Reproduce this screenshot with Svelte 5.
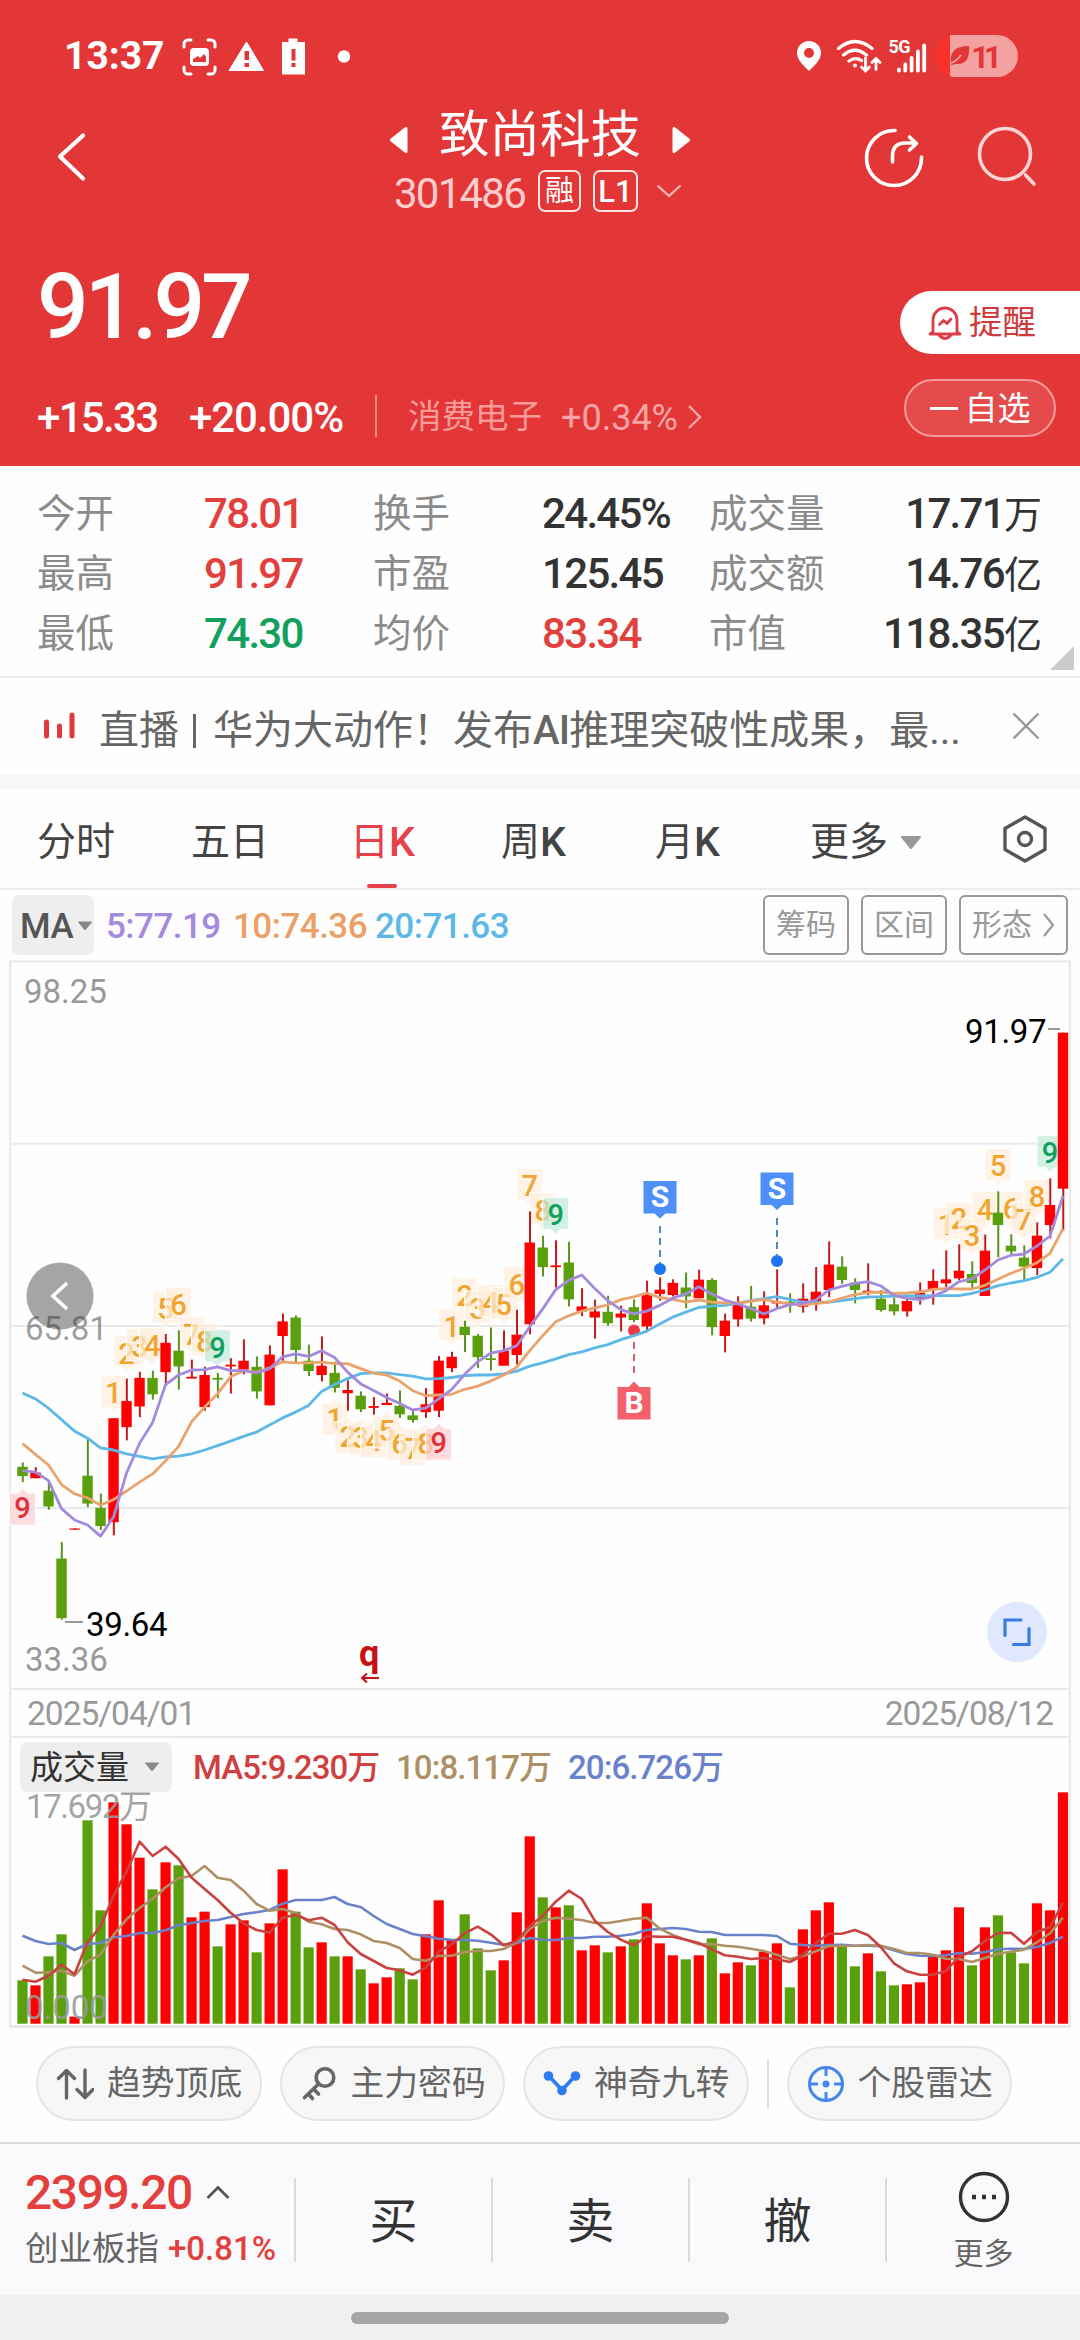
<script lang="ts">
  const stats = [
    { label: '今开', value: '78.01', tone: 'up' },
    { label: '换手', value: '24.45%', tone: '' },
    { label: '成交量', value: '17.71', unit: '万', tone: '' },
    { label: '最高', value: '91.97', tone: 'up' },
    { label: '市盈', value: '125.45', tone: '' },
    { label: '成交额', value: '14.76', unit: '亿', tone: '' },
    { label: '最低', value: '74.30', tone: 'down' },
    { label: '均价', value: '83.34', tone: 'up' },
    { label: '市值', value: '118.35', unit: '亿', tone: '' }
  ];

  const STEP = 13.006;
  const X0 = 22.5;
  const cx = (i: number) => X0 + i * STEP;

  // [rising, high, top, bottom, low]
  // y units: the first 54 are stored at 2.8x from 1100, the rest at 3x from 1000
  const rawA = [
    [0, 1015, 1027, 1053, 1070], [1, 1028, 1043, 1059, 1059], [0, 1070, 1094, 1138, 1147],
    [0, 1238, 1284, 1451, 1455], [1, 1199, 1199, 1203, 1203], [0, 950, 1052, 1130, 1140],
    [0, 1102, 1142, 1193, 1204], [1, 891, 891, 1182, 1219], [1, 780, 843, 916, 953],
    [1, 761, 778, 858, 888], [0, 758, 778, 824, 839], [1, 655, 680, 762, 795],
    [0, 645, 702, 746, 811], [1, 727, 775, 779, 779], [1, 747, 770, 860, 870],
    [0, 764, 778, 782, 835], [1, 723, 741, 746, 822], [1, 670, 730, 755, 768],
    [0, 718, 747, 816, 836], [1, 687, 713, 855, 855], [1, 598, 620, 661, 735],
    [0, 603, 609, 700, 735], [0, 685, 730, 759, 773], [1, 662, 744, 770, 788],
    [0, 733, 764, 806, 819], [1, 785, 812, 821, 870], [0, 816, 828, 866, 874],
    [1, 832, 857, 861, 881], [1, 822, 848, 854, 854], [0, 813, 856, 880, 890],
    [0, 870, 883, 896, 903], [1, 807, 852, 874, 890], [1, 717, 730, 870, 888],
    [1, 705, 719, 751, 762], [0, 618, 635, 658, 706], [0, 655, 660, 720, 750],
    [0, 637, 723, 727, 758], [1, 645, 702, 744, 744], [1, 587, 657, 714, 740],
    [1, 312, 399, 628, 656], [0, 380, 413, 468, 494], [1, 393, 463, 468, 525],
    [0, 397, 455, 558, 578], [1, 527, 578, 592, 605], [1, 559, 592, 609, 668],
    [0, 548, 593, 625, 632], [1, 576, 598, 609, 648], [0, 558, 580, 616, 622],
    [1, 506, 544, 634, 650], [1, 497, 531, 543, 562], [1, 502, 512, 546, 550],
    [0, 483, 525, 550, 583], [1, 475, 503, 555, 555], [0, 499, 504, 636, 659]
  ];
  const rawB = [
    [1, 941, 962, 1008, 1057], [1, 889, 912, 958, 980], [0, 858, 920, 956, 965],
    [1, 874, 916, 955, 973], [1, 808, 905, 909, 925], [0, 880, 905, 909, 938],
    [1, 850, 896, 920, 938], [1, 801, 875, 905, 932], [1, 724, 794, 870, 891],
    [0, 769, 800, 840, 852], [0, 835, 848, 870, 910], [1, 790, 872, 876, 885],
    [0, 870, 896, 930, 935], [0, 893, 913, 934, 946], [1, 895, 903, 934, 950],
    [1, 847, 878, 898, 914], [1, 808, 843, 867, 914], [1, 751, 838, 850, 862],
    [1, 733, 812, 835, 840], [0, 784, 822, 849, 870], [1, 704, 752, 888, 888],
    [0, 574, 638, 675, 772], [0, 703, 737, 754, 762], [0, 736, 773, 800, 840],
    [1, 667, 707, 804, 825], [1, 535, 615, 675, 715], [1, 98, 98, 566, 693]
  ];
  const ya = (v: number) => 1100 + v / 2.8;
  const yb = (v: number) => 1000 + v / 3;
  const candles = [
    ...rawA.map(([up, ...v]) => ({ up, y: v.map(ya) })),
    ...rawB.map(([up, ...v]) => ({ up, y: v.map(yb) }))
  ];

  const line = (a: number[], b: number[] = [], fa = ya) =>
    [...a.map(fa), ...b.map(yb)].map((y, i) => `${cx(i).toFixed(1)},${y.toFixed(1)}`).join(' ');

  const ma5 = line(
    [1038, 1042, 1066, 1144, 1176, 1190, 1221, 1168, 1045, 961, 903, 797, 770, 756, 755, 747, 758, 758, 764, 752, 719, 711, 718, 702, 721, 762, 795, 813, 833, 850, 868, 863, 837, 810, 768, 733, 709, 702, 688, 635, 585, 531, 505, 490, 528, 562, 587, 599, 591, 575, 555, 543, 523, 543],
    [900, 912, 925, 942, 926, 914, 910, 900, 870, 859, 850, 845, 858, 886, 895, 899, 889, 872, 845, 837, 810, 780, 766, 762, 738, 708, 588]
  );
  const ma10 = line(
    [962, 992, 1022, 1077, 1103, 1114, 1134, 1119, 1095, 1070, 1047, 1010, 970, 901, 860, 822, 775, 758, 762, 750, 733, 736, 736, 734, 738, 738, 752, 765, 770, 787, 814, 828, 826, 824, 810, 801, 787, 770, 748, 702, 660, 621, 604, 591, 582, 574, 559, 551, 541, 553, 558, 566, 560, 566],
    [909, 909, 904, 898, 906, 912, 914, 911, 906, 894, 884, 878, 876, 880, 879, 876, 868, 866, 867, 867, 856, 838, 820, 805, 788, 760, 686]
  );
  const ma20 = line(
    [820, 837, 863, 895, 927, 947, 974, 980, 991, 998, 1005, 999, 997, 991, 980, 968, 955, 942, 930, 910, 890, 874, 855, 816, 797, 780, 766, 764, 764, 769, 773, 781, 780, 777, 772, 770, 770, 767, 759, 745, 736, 725, 713, 705, 694, 685, 671, 660, 647, 627, 608, 594, 581, 577],
    [916, 910, 902, 896, 890, 898, 906, 908, 906, 902, 896, 891, 890, 888, 888, 888, 887, 887, 887, 880, 870, 857, 849, 842, 832, 817, 776]
  );

  // nine-turn counters: first candle index and side
  const turns: { i: number; n: number; below: boolean }[] = [{ i: 0, n: 9, below: true }];
  for (const [start, below] of [[7, false], [24, true], [33, false], [71, false]] as [number, boolean][]) {
    for (let n = 1; n <= 9; n++) turns.push({ i: start + n - 1, n, below });
  }
  const turnTop = (t: { i: number; below: boolean }) =>
    t.below ? candles[t.i].y[3] + 11 : candles[t.i].y[0] - 43;
  const turnKind = (t: { n: number; below: boolean }) => (t.n < 9 ? 'count' : t.below ? 'buy' : 'sell');

  const yv = (v: number) => 1640 + v / 3;
  const volumes = [
    1021, 1036, 949, 883, 1130, 541, 811, 487, 553, 653, 748, 667, 676, 832, 815, 919, 853, 841, 937, 850, 688,
    815, 922, 907, 949, 949, 988, 1030, 1012, 985, 1018, 883, 781, 900, 823, 925, 991, 961, 817, 589, 772, 802,
    796, 931, 916, 937, 919, 898, 790, 910, 946, 958, 946, 895, 1000, 967, 976, 935, 910, 1042, 868, 811, 787,
    919, 979, 940, 994, 1036, 1033, 1027, 950, 931, 802, 976, 862, 826, 937, 970, 790, 811, 457
  ].map(yv);
  const vma5 = line([1019, 1025, 1007, 974, 1003, 907, 860, 767, 695, 605, 648, 620, 657, 713, 747, 780, 818, 850, 870, 878, 833, 824, 841, 833, 855, 907, 942, 963, 984, 991, 1004, 983, 935, 913, 880, 860, 883, 916, 903, 858, 828, 785, 752, 777, 842, 876, 899, 916, 889, 890, 890, 899, 909, 928, 946, 950, 957, 954, 958, 966, 945, 910, 881, 881, 870, 885, 922, 970, 994, 1004, 1004, 993, 950, 934, 903, 879, 878, 911, 876, 862, 788], [], yv);
  const vma10 = line([977, 998, 997, 992, 1007, 964, 943, 885, 838, 804, 776, 742, 715, 708, 678, 713, 720, 752, 792, 812, 807, 819, 845, 853, 867, 870, 883, 903, 909, 924, 957, 962, 947, 947, 936, 933, 933, 927, 907, 867, 843, 833, 836, 840, 849, 849, 843, 836, 833, 866, 885, 899, 913, 912, 917, 920, 926, 933, 944, 957, 948, 934, 918, 918, 917, 915, 917, 927, 939, 939, 944, 956, 957, 966, 954, 941, 935, 929, 907, 880, 833], [], yv);
  const vma20 = line([887, 903, 912, 909, 930, 912, 909, 892, 888, 879, 879, 871, 856, 849, 843, 840, 831, 822, 817, 810, 791, 780, 780, 780, 771, 792, 801, 828, 852, 867, 882, 889, 896, 899, 900, 902, 908, 914, 910, 894, 899, 900, 894, 894, 890, 890, 887, 882, 870, 867, 864, 867, 875, 876, 885, 885, 885, 885, 888, 911, 915, 917, 915, 914, 917, 917, 919, 931, 942, 947, 948, 946, 939, 941, 936, 928, 926, 927, 921, 909, 890], [], yv);
</script>

<div class="screen">
  <header>
    <div class="status">
      <span class="clock">13:37</span>
      <svg class="s-left" width="170" height="40" viewBox="180 36 170 40">
        <g fill="none" stroke="#fff" stroke-width="3" stroke-linecap="round">
          <path d="M191 41h-3a4 4 0 0 0-4 4v3M208 41h3a4 4 0 0 1 4 4v3M191 75h-3a4 4 0 0 1-4-4v-3M208 75h3a4 4 0 0 0 4-4v-3" transform="translate(0 -1)" />
        </g>
        <rect x="190" y="48" width="19" height="18" rx="4" fill="#fff" />
        <path d="M193 62v-3l5-3 2 2 4-4 2 3v5z" fill="#e33637" />
        <path d="M246.500 42l17 28.500h-34.500z" fill="#fff" stroke="#fff" stroke-width="1" stroke-linejoin="round" />
        <path d="M244.500 51h4.500v9h-4.500zM244.500 63h4.500v4h-4.500z" fill="#e33637" />
        <path d="M282 42h6.500v-3.500h9v3.500h7.500v32.500h-23z" fill="#fff" />
        <path d="M291.500 49h4v11.500h-4zM291.500 63h4v4h-4z" fill="#e33637" />
        <circle cx="344" cy="56.500" r="6.200" fill="#fff" />
      </svg>
      <svg class="s-right" width="222" height="44" viewBox="796 34 222 44">
        <path fill-rule="evenodd" d="M809 41a12 12 0 0 1 12 12c0 7-7 13-12 18-5-5-12-11-12-18a12 12 0 0 1 12-12zm0 7a5 5 0 1 0 0 10 5 5 0 0 0 0-10z" fill="#fff" />
        <g fill="none" stroke="#fff" stroke-width="3.200" stroke-linecap="round">
          <path d="M838.500 48.500q16.500-14 33.500 0M843.500 55q11.500-9.500 23 0M849 61q6.500-4.500 12.500-.5" />
          <path d="M865.500 58v12M861.500 67l4 4 4-4M876 69.500V59M872 62.500l4-4 4 4" stroke-width="2.800" />
        </g>
        <circle cx="855" cy="65.500" r="2" fill="#fff" />
        <text x="888.500" y="53" font-size="18" font-weight="700" fill="#fff" textLength="22">5G</text>
        <path d="M899 69.500v1M905.300 64.500v6M911.600 58v12.500M917.900 51.500v19M924.200 45.500v25" stroke="#fff" stroke-width="3.800" stroke-linecap="round" />
        <path d="M950 35h47a20.800 20.800 0 0 1 0 42h-43q-2 0-4-1z" fill="#f3a1a1" />
        <path d="M950 35.500a21.500 21.500 0 0 0 0 41z" fill="#f8322a" />
        <path d="M951 63c-1-10 3-17 18-17 1 12-3 19-13 18l-5 1z" fill="#e33637" />
        <path d="M951 63q6-2 10-8" stroke="#f3a1a1" stroke-width="1.800" fill="none" />
        <text x="971" y="67.500" font-size="32" font-weight="700" fill="#e33637" textLength="31">11</text>
      </svg>
    </div>

    <div class="nav">
      <svg class="back" width="36" height="56" viewBox="54 129 36 56"><path d="M83 136L60 157l23 22" transform="translate(0 -.5)" fill="none" stroke="#fff" stroke-width="4.200" stroke-linecap="round" stroke-linejoin="round" /></svg>
      <div class="title">
        <div class="name">
          <svg width="20" height="28" viewBox="0 0 20 28"><path d="M17 2.500L2.500 14 17 25.500z" fill="#fff" stroke="#fff" stroke-width="3" stroke-linejoin="round" /></svg>
          <h1>致尚科技</h1>
          <svg width="20" height="28" viewBox="0 0 20 28"><path d="M3 2.500L17.500 14 3 25.500z" fill="#fff" stroke="#fff" stroke-width="3" stroke-linejoin="round" /></svg>
        </div>
        <div class="code">
          <span class="num">301486</span>
          <span class="tag">融</span>
          <span class="tag l1">L1</span>
          <svg width="26" height="14" viewBox="0 0 26 14"><path d="M1.500 1.500L13 12 24.500 1.500" fill="none" stroke="#fbb" stroke-width="2.200" /></svg>
        </div>
      </div>
      <svg class="tools" width="180" height="70" viewBox="862 122 180 70" fill="none" stroke="#fff" stroke-linecap="round">
        <path d="M895 130.500A27.500 27.500 0 1 0 921.500 157" stroke-width="3.600" />
        <path d="M892.500 162v-6q0-13 13-13h10M909.500 137l7 6.500-7 6.500" stroke-width="3.600" stroke-linejoin="round" />
        <circle cx="1005" cy="154" r="25.500" stroke="#ffd4d4" stroke-width="3.600" />
        <path d="M1025.500 175l8.500 9" stroke="#ffd4d4" stroke-width="3.600" />
      </svg>
    </div>

    <div class="quote">
      <div class="price num">91.97</div>
      <div class="remind">
        <svg width="34" height="36" viewBox="0 0 34 36" fill="none" stroke="#dd3d44" stroke-width="2.800" stroke-linejoin="round" stroke-linecap="round">
          <path d="M5 27V15a12 12 0 0 1 24 0v12l3 2H2zM11 30q6 7 12 0" />
          <path d="M11.500 19.500l4-4 3.500 3 4-4.500" />
        </svg>
        <span>提醒</span>
      </div>
    </div>

    <div class="change">
      <span class="num delta">+15.33</span>
      <span class="num pct">+20.00%</span>
      <i class="bar"></i>
      <span class="sector">消费电子</span>
      <span class="num sector-pct">+0.34%</span>
      <svg width="15" height="26" viewBox="0 0 15 26"><path d="M2 2l11 11L2 24" fill="none" stroke="#f9a5a5" stroke-width="2.400" /></svg>
      <div class="watch"><i></i>自选</div>
    </div>
  </header>

  <section class="stats">
    {#each stats as s}
      <span class="label">{s.label}</span>
      <span class="value num {s.tone}">{s.value}{#if s.unit}<small>{s.unit}</small>{/if}</span>
    {/each}
    <svg class="corner" width="24" height="24" viewBox="0 0 24 24"><path d="M24 0v24H0z" fill="#ccc" /></svg>
  </section>

  <section class="news">
    <svg width="34" height="28" viewBox="0 0 34 28"><path d="M3.500 10v14M16.500 14v10M29 3v21" stroke="#e0383c" stroke-width="5" stroke-linecap="round" /></svg>
    <p>直播<i></i>华为大动作！发布<b>AI</b>推理突破性成果，最...</p>
    <svg width="28" height="28" viewBox="0 0 28 28"><path d="M1.500 1.500l25 25M26.500 1.500l-25 25" stroke="#999" stroke-width="2.400" /></svg>
  </section>

  <nav class="tabs">
    <span>分时</span>
    <span>五日</span>
    <span class="active">日<b>K</b></span>
    <span>周<b>K</b></span>
    <span>月<b>K</b></span>
    <span class="more">更多<svg width="22" height="14" viewBox="0 0 22 14"><path d="M2 1h18l-9 11z" fill="#999" stroke="#999" stroke-width="2" stroke-linejoin="round" /></svg></span>
    <svg class="gear" width="48" height="50" viewBox="0 0 48 50" fill="none" stroke="#555" stroke-width="3.400" stroke-linejoin="round"><path d="M24 3l20 11.500v21L24 47 4 35.500v-21z" /><circle cx="24" cy="25" r="6.500" /></svg>
  </nav>

  <section class="ma-row">
    <span class="select num">MA<svg width="16" height="10" viewBox="0 0 16 10"><path d="M1.500 1h13L8 9z" fill="#888" stroke="#888" stroke-linejoin="round" /></svg></span>
    <span class="num m5">5:77.19</span>
    <span class="num m10">10:74.36</span>
    <span class="num m20">20:71.63</span>
    <div class="btns">
      <button>筹码</button>
      <button>区间</button>
      <button class="wide">形态<svg width="13" height="26" viewBox="0 0 13 26"><path d="M2 2l9 11-9 11" fill="none" stroke="#999" stroke-width="2.200" /></svg></button>
    </div>
  </section>

  <section class="chart">
    <svg width="1080" height="730" viewBox="0 960 1080 730">
      <path d="M10 1690V961.500h1060V1690M10 1143.700h1060M10 1325.900h1060M10 1508h1060M10 1689h1060" fill="none" stroke="#e9e9e9" stroke-width="2" />
      <circle cx="60" cy="1296" r="33.500" fill="#a5a5a5" />
      <path d="M67 1283l-14 13 14 13" fill="none" stroke="#fff" stroke-width="3.600" />

      {#each turns as t}
        {@const top = turnTop(t)}
        {@const x = cx(t.i)}
        <g class="turn {turnKind(t)}">
          <path
            d={t.below
              ? `M${x - 13} ${top}h8l5-5 5 5h8v32h-26z`
              : `M${x - 13} ${top}h26v32h-8l-5 5-5-5h-8z`}
          />
          <text {x} y={top + (t.below ? 25 : 28)}>{t.n}</text>
        </g>
      {/each}

      <g class="axis">
        <text x="24" y="1003">98.25</text>
        <text x="25" y="1339.500" class="mid">65.81</text>
        <text x="25" y="1671">33.36</text>
      </g>

      {#each candles as c, i}
        {@const color = c.up ? '#fe0000' : '#5aa00c'}
        {@const flat = c.y[2] - c.y[1] < 2}
        <line x1={cx(i) + 0.3} x2={cx(i) + 0.3} y1={c.y[0]} y2={c.y[3]} stroke={c.up ? '#c21a1a' : '#58931c'} stroke-width="2" />
        <rect x={cx(i) - 5.2} y={c.y[1]} width="10.400" height={flat ? 1.8 : c.y[2] - c.y[1]} fill={color} opacity={i === 4 ? 0.65 : 1} />
      {/each}

      <circle cx="634" cy="1330.500" r="6" fill="#ee3a46" />
      <polyline points={ma20} fill="none" stroke="#5cb8e6" stroke-width="2.800" stroke-linejoin="round" />
      <polyline points={ma10} fill="none" stroke="#eba36d" stroke-width="2.800" stroke-linejoin="round" />
      <polyline points={ma5} fill="none" stroke="#a48add" stroke-width="2.800" stroke-linejoin="round" />

      <g class="mark">
        <path d="M643.500 1181h33v32.500h-11l-5.500 5-5.500-5h-11z" fill="#4f8ff8" />
        <text x="660" y="1207">S</text>
        <path d="M660 1226v37" stroke="#4a8acb" stroke-width="2" stroke-dasharray="7 5" />
        <circle cx="660" cy="1269" r="6" fill="#1f74f2" />
        <path d="M760.500 1172.500h33v32.500h-11l-5.500 5-5.500-5h-11z" fill="#4f8ff8" />
        <text x="777" y="1199">S</text>
        <path d="M777 1218v37" stroke="#4a8acb" stroke-width="2" stroke-dasharray="7 5" />
        <circle cx="777" cy="1261" r="6" fill="#1f74f2" />
        <path d="M617.500 1419.500v-32.500h11l5.500-5.500 5.500 5.500h11v32.500z" fill="#f3606b" />
        <text x="634" y="1413">B</text>
        <path d="M634 1342v36" stroke="#d2606a" stroke-width="2" stroke-dasharray="7 5" />
      </g>

      <path d="M1048 1029h12M65 1622h18" stroke="#777" stroke-width="1.600" />
      <text x="965" y="1043" class="extreme">91.97</text>
      <text x="86" y="1636" class="extreme">39.64</text>

      <text x="359" y="1666" font-size="36" font-weight="700" fill="#c90f12">q</text>
      <path d="M379 1678h-17M367 1673.500l-5 4.500 5 4.500" fill="none" stroke="#c90f12" stroke-width="2" />

      <circle cx="1017" cy="1632" r="30" fill="#dfe8fc" />
      <path d="M1005 1635.500v-15.500h16M1013.500 1644.500h15.500v-16" fill="none" stroke="#3a7be2" stroke-width="3.200" stroke-linecap="round" />
    </svg>

    <div class="dates"><span>2025/04/01</span><span>2025/08/12</span></div>

    <div class="vol-legend">
      <span class="select">成交量<svg width="16" height="10" viewBox="0 0 16 10"><path d="M1.500 1h13L8 9z" fill="#888" stroke="#888" stroke-linejoin="round" /></svg></span>
      <span class="num v5">MA5:9.230万</span>
      <span class="num v10">10:8.117万</span>
      <span class="num v20">20:6.726万</span>
    </div>

    <svg class="vol-plot" width="1080" height="237" viewBox="0 1792 1080 237">
      <path d="M10 1792v235h1060v-235" fill="none" stroke="#e9e9e9" stroke-width="2" />
      <path d="M9 2026.500h1062" stroke="#e9e9e9" stroke-width="3" />
      {#each volumes as v, i}
        <rect x={cx(i) - 5.1} y={v} width="10.200" height={2023.7 - v} fill={candles[i].up ? '#fe0000' : '#5aa00c'} />
      {/each}
      <g fill="none" stroke-width="2.600" stroke-linejoin="round">
        <polyline points={vma20} stroke="#6a82cc" />
        <polyline points={vma10} stroke="#ad9064" />
        <polyline points={vma5} stroke="#c94141" />
      </g>
      <g class="axis vol">
        <text x="26" y="1818" textLength="126">17.692万</text>
        <text x="25" y="2019">0.000</text>
      </g>
    </svg>
  </section>

  <section class="chips">
    <div class="chip">
      <svg width="38" height="34" viewBox="0 0 38 34" fill="none" stroke="#666" stroke-width="3.400" stroke-linecap="round" stroke-linejoin="round"><path d="M10.500 31V4M2.500 11.500l8-8 8 8M29 3v27M21 22.500l8 8 8-8" /></svg>
      趋势顶底
    </div>
    <div class="chip">
      <svg width="38" height="36" viewBox="0 0 38 36" fill="none" stroke="#666" stroke-width="3.600" stroke-linecap="round"><circle cx="25" cy="11.500" r="8.800" /><path d="M18.500 18L4.500 31.500M8.500 28l4 4.500M13.500 23l5 5" /></svg>
      主力密码
    </div>
    <div class="chip">
      <svg width="38" height="34" viewBox="0 0 38 34"><path d="M5 8l14 15L33 8" fill="none" stroke="#2c7bf2" stroke-width="3.600" /><circle cx="5.500" cy="9" r="4.800" fill="#2c7bf2" /><circle cx="32.500" cy="9" r="4.800" fill="#2c7bf2" /><circle cx="19" cy="23.500" r="4.800" fill="#2c7bf2" /></svg>
      神奇九转
    </div>
    <i class="sep"></i>
    <div class="chip">
      <svg width="38" height="38" viewBox="0 0 38 38" fill="none" stroke="#4585ee" stroke-width="3"><circle cx="19" cy="19" r="16.500" /><path d="M19 3v8M19 27v8M3 19h8M27 19h8" /><circle cx="19" cy="19" r="3.500" fill="#4585ee" stroke="none" /></svg>
      个股雷达
    </div>
  </section>

  <footer>
    <div class="index">
      <div class="idx-top"><span class="num">2399.20</span><svg width="24" height="15" viewBox="0 0 24 15"><path d="M1.500 13L12 2.500 22.500 13" fill="none" stroke="#555" stroke-width="2.800" /></svg></div>
      <div class="idx-sub">创业板指<span class="num">+0.81%</span></div>
    </div>
    <div class="act">买</div>
    <div class="act">卖</div>
    <div class="act">撤</div>
    <div class="more">
      <svg width="52" height="52" viewBox="0 0 52 52"><circle cx="26" cy="26" r="23.500" fill="none" stroke="#333" stroke-width="3.400" /><path d="M14 26h4M24 26h4M34 26h4" stroke="#333" stroke-width="4.600" /></svg>
      <span>更多</span>
    </div>
  </footer>
  <div class="home"><i></i></div>
</div>

<style>
  :global(body) {
    background: #fefefe;
  }

  .screen {
    width: 1080px;
    height: 2340px;
    overflow: hidden;
    background: #fefefe;
    font-family: Roboto, 'Noto Sans CJK SC', sans-serif;
    line-height: 1;
    color: #333;
    display: flex;
    flex-direction: column;
  }

  svg {
    display: block;
    flex: none;
  }

  .num {
    font-weight: 500;
    letter-spacing: -0.04em;
    white-space: nowrap;
  }

  header {
    height: 466px;
    background: #e33637;
    color: #fff;
    display: flex;
    flex-direction: column;
  }

  .status {
    display: flex;
    align-items: center;
    height: 112px;
    padding-left: 64px;
  }

  .clock {
    font-size: 39px;
    font-weight: 700;
    width: 116px;
  }

  .s-right {
    margin-left: 446px;
  }

  .nav {
    display: flex;
    height: 108px;
    padding-left: 54px;
  }

  .back {
    margin-top: 17px;
  }

  .title {
    width: 302px;
    margin-left: 299px;
  }

  .name {
    display: flex;
    align-items: center;
    justify-content: space-between;
    height: 56px;
  }

  h1 {
    margin: -10px 0 0;
    font-size: 50.500px;
    font-weight: 400;
  }

  .code {
    display: flex;
    align-items: center;
    margin-left: 5px;
    height: 46px;
  }

  .code .num {
    font-size: 42px;
    font-weight: 400;
    letter-spacing: -0.042em;
    color: #ffcdcd;
    width: 144px;
    margin-top: 5px;
  }

  .tag {
    width: 43px;
    height: 42px;
    box-sizing: border-box;
    border: 2px solid #ffe4e4;
    border-radius: 7px;
    font-size: 29px;
    display: flex;
    align-items: center;
    justify-content: center;
  }

  .l1 {
    width: 45px;
    margin: 0 18px 0 12px;
    font-size: 31px;
    font-weight: 500;
  }

  .tools {
    margin: 10px 0 0 171px;
  }

  .quote {
    display: flex;
    justify-content: space-between;
    height: 158px;
    padding-left: 37px;
  }

  .price {
    font-size: 91px;
    margin-top: 42px;
  }

  .quote .price {
    letter-spacing: -0.045em;
  }

  .remind {
    margin-top: 71px;
    width: 180px;
    height: 63px;
    box-sizing: border-box;
    padding-left: 28px;
    border-radius: 32px 0 0 32px;
    background: #fff;
    color: #cf3a3a;
    font-size: 33.500px;
    display: flex;
    align-items: center;
    gap: 7px;
  }

  .change {
    display: flex;
    align-items: center;
    padding: 0 24px 0 37px;
    height: 78px;
  }

  .change .num {
    margin-top: 1px;
  }

  .delta {
    font-size: 42px;
    width: 152px;
  }

  .change .pct {
    font-size: 42px;
    letter-spacing: -0.025em;
    width: 185px;
  }

  .bar {
    width: 2px;
    height: 42px;
    background: #f08585;
    margin: -2px 31px 0 1px;
  }

  .sector {
    font-size: 33.500px;
    color: #f99b9b;
    width: 153px;
  }

  .change .sector-pct {
    font-size: 36px;
    font-weight: 400;
    letter-spacing: 0;
    color: #f9a5a5;
    width: 126px;
  }

  .watch {
    margin: -18px 0 0 auto;
    width: 152px;
    height: 58px;
    box-sizing: border-box;
    border: 2px solid #f49c9c;
    border-radius: 29px;
    background: #e64b4c;
    font-size: 33px;
    display: flex;
    align-items: center;
    justify-content: center;
    gap: 7px;
  }

  .watch i {
    width: 28px;
    height: 3px;
    background: #fff;
  }

  .stats {
    position: relative;
    height: 212px;
    box-sizing: border-box;
    border-bottom: 2px solid #ececec;
    padding: 18px 38px 0 37px;
    display: grid;
    grid-template-columns: 167px 169px 169px 167px 136px 197px;
    grid-auto-rows: 60px;
    align-items: center;
  }

  .label {
    font-size: 38.500px;
    color: #8b8b8b;
  }

  .value {
    font-size: 42px;
  }

  .value small {
    font-size: 38px;
    font-weight: 400;
    letter-spacing: 0;
  }

  .value:nth-of-type(6n) {
    text-align: right;
  }

  .up {
    color: #e3403d;
  }

  .down {
    color: #12a05f;
  }

  .corner {
    position: absolute;
    right: 6px;
    bottom: 6px;
  }

  .news {
    height: 96px;
    border-bottom: 15px solid #f7f7f7;
    padding: 0 40px 0 43px;
    display: flex;
    align-items: center;
  }

  .news p {
    margin: 10px 0 0 22px;
    flex: 1;
    font-size: 40px;
    color: #666;
    white-space: nowrap;
  }

  .news b {
    font-weight: 500;
    letter-spacing: -0.02em;
  }

  .news p i {
    display: inline-block;
    width: 3px;
    height: 34px;
    background: #666;
    margin: 0 17px 0 14px;
    vertical-align: -4px;
  }

  .tabs {
    height: 99px;
    border-bottom: 2px solid #ececec;
    padding-left: 37px;
    display: flex;
    align-items: center;
    font-size: 39px;
    color: #444;
  }

  .tabs span {
    width: 154px;
    height: 99px;
    display: flex;
    align-items: center;
    padding-top: 8px;
    box-sizing: border-box;
  }

  .tabs b {
    font-weight: 500;
    font-size: 41px;
  }

  .tabs .active {
    color: #e8404a;
    position: relative;
    margin-left: 5px;
    width: 151px;
  }

  .active::after {
    content: '';
    position: absolute;
    left: 17px;
    bottom: 0;
    width: 30px;
    height: 4px;
    border-radius: 2px;
    background: #e8404a;
  }

  .tabs .more {
    width: 191px;
    margin-left: 1px;
    gap: 12px;
  }

  .ma-row {
    height: 70px;
    padding: 0 12px;
    display: flex;
    align-items: center;
  }

  .select {
    background: #eee;
    border-radius: 7px;
    display: flex;
    align-items: center;
  }

  .ma-row .select {
    width: 82px;
    height: 60px;
    box-sizing: border-box;
    padding-left: 8px;
    gap: 4px;
    font-size: 34px;
    letter-spacing: -0.04em;
    color: #555;
    margin-right: 12px;
  }

  .ma-row > .num {
    font-size: 35px;
    letter-spacing: -0.015em;
    padding-top: 2px;
  }

  .m5 {
    width: 127px;
    color: #a48add;
  }

  .m10 {
    width: 142px;
    color: #eba065;
  }

  .m20 {
    color: #5cb8e6;
  }

  .btns {
    margin-left: auto;
    display: flex;
    gap: 12px;
  }

  button {
    width: 86px;
    height: 60px;
    padding: 0;
    border: 2px solid #999;
    border-radius: 6px;
    background: none;
    font: inherit;
    font-size: 30px;
    color: #999;
    display: flex;
    align-items: center;
    justify-content: center;
    gap: 10px;
  }

  .wide {
    width: 109px;
  }

  .vol-plot {
    overflow: visible;
  }

  .axis {
    font-size: 33px;
    fill: #999;
  }

  .axis .mid {
    fill: rgba(60, 60, 60, 0.5);
  }

  .axis.vol {
    fill: #999;
    fill-opacity: 0.9;
  }

  .turn path {
    stroke: #fff;
    stroke-width: 1;
    fill-opacity: 0.7;
  }

  .turn text,
  .mark text {
    font-size: 29px;
    font-weight: 500;
    text-anchor: middle;
  }

  .count path {
    fill: #feeedb;
  }

  .count text {
    fill: #f0a431;
  }

  .buy path {
    fill: #fbcdd1;
  }

  .buy text {
    fill: #e0323e;
  }

  .sell path {
    fill: #c0e9d8;
  }

  .sell text {
    fill: #12a05f;
  }

  .mark text {
    font-size: 30px;
    font-weight: 700;
    fill: #fff;
  }

  .extreme {
    font-size: 33px;
    letter-spacing: -0.01em;
    fill: #000;
  }

  .dates {
    height: 46px;
    margin: 0 9px;
    border: solid #e9e9e9;
    border-width: 0 2px 2px;
    padding: 2px 16px 0;
    box-sizing: border-box;
    height: 48px;
    display: flex;
    align-items: center;
    justify-content: space-between;
    font-size: 33.500px;
    letter-spacing: -0.03em;
    color: #999;
  }

  .vol-legend {
    height: 54px;
    margin: 0 9px;
    border: solid #e9e9e9;
    border-width: 0 2px;
    padding: 4px 0 0 9px;
    box-sizing: border-box;
    display: flex;
    align-items: center;
    font-size: 33px;
  }

  .vol-legend .select {
    width: 152px;
    height: 50px;
    padding-left: 10px;
    gap: 15px;
    margin-right: 21px;
    box-sizing: border-box;
  }

  .vol-legend .num {
    letter-spacing: -0.028em;
  }

  .v5 {
    color: #cf4040;
    width: 203px;
  }

  .v10 {
    color: #ad9064;
    width: 172px;
  }

  .v20 {
    color: #6a82cc;
  }

  .chips {
    display: flex;
    align-items: center;
    height: 115px;
    padding: 0 36px 4px;
    gap: 18px;
    border-bottom: 2px solid #dcdcde;
    box-sizing: border-box;
  }

  .chip {
    width: 225.500px;
    height: 75px;
    box-sizing: border-box;
    border: 2px solid #e5e5e5;
    border-radius: 38px;
    background: #f7f7f7;
    color: #666;
    font-size: 33.800px;
    white-space: nowrap;
    display: flex;
    align-items: center;
    padding-left: 18px;
    gap: 13px;
  }

  .sep {
    width: 2px;
    height: 48px;
    background: #ddd;
  }

  footer {
    height: 151px;
    background: #fafafc;
    display: flex;
    align-items: center;
  }

  .index {
    width: 294px;
    box-sizing: border-box;
    padding: 0 0 5px 25px;
  }

  .idx-top {
    display: flex;
    align-items: center;
    gap: 14px;
    font-size: 48px;
    color: #e3403d;
  }

  .idx-top .num {
    letter-spacing: -0.03em;
  }

  .idx-sub {
    margin-top: 15px;
    font-size: 33.500px;
    color: #666;
    white-space: nowrap;
  }

  .idx-sub .num {
    font-size: 33px;
    letter-spacing: 0;
    margin-left: 9px;
    color: #e3403d;
  }

  .act {
    width: 197px;
    height: 84px;
    box-sizing: border-box;
    border-left: 2px solid #dadadc;
    padding-top: 5px;
    display: flex;
    align-items: center;
    justify-content: center;
    font-size: 48px;
  }

  footer .more {
    flex: 1;
    height: 84px;
    border-left: 2px solid #dadadc;
    display: flex;
    flex-direction: column;
    align-items: center;
    justify-content: center;
    gap: 16px;
    font-size: 30px;
    color: #666;
  }

  .home {
    height: 45px;
    background: #f0f0f2;
    display: flex;
    justify-content: center;
    padding-top: 17px;
    box-sizing: border-box;
  }

  .home i {
    width: 378px;
    height: 12px;
    border-radius: 6px;
    background: #a6a6a8;
  }
</style>
